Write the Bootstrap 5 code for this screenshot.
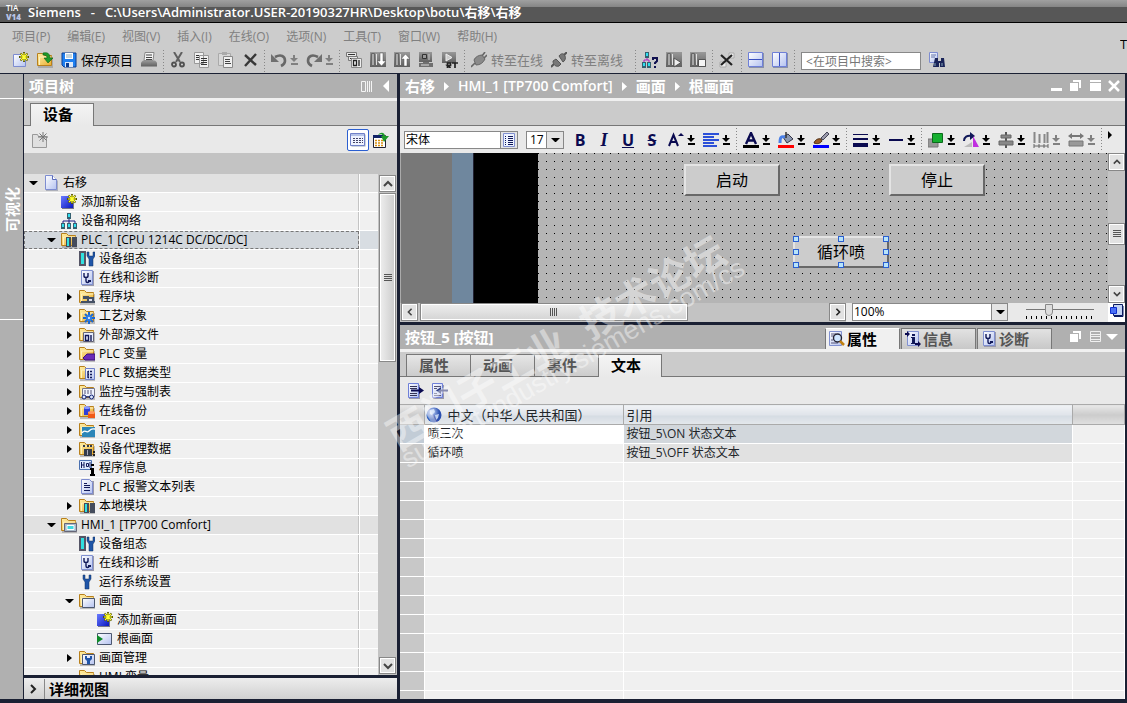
<!DOCTYPE html>
<html lang="zh-CN">
<head>
<meta charset="utf-8">
<meta name="viewport" content="width=device-width, initial-scale=1">
<title>Siemens - 右移</title>
<link rel="stylesheet" href="https://cdn.jsdelivr.net/npm/bootstrap@5.3.0/dist/css/bootstrap.min.css">
<style>
:root{--dark:#1a2033;--head:#b0b0b0;--strip:#cbcbcb;--tool:#e9e9e9;--track:#c3c3c3;--rule:#777}
body{font-family:"Open Sans","Noto Sans CJK SC",sans-serif;font-size:12px;line-height:18px;color:#000;background:var(--dark);overflow:hidden}
a,a:hover{color:inherit;text-decoration:none}
button{border:0;background:none;padding:0;color:inherit}
svg{display:block;flex:none}
.ic{width:16px;height:16px}
/* title and menus */
.titlebar{height:23px;padding:1px 6px 0;gap:6px;color:#fff;font-size:13px;font-weight:600;border-bottom:1px solid #000;background:linear-gradient(#a0a0a0,#858585 7px,#575757 7px,#575757)}
.tia{display:flex;flex-direction:column;font-size:8px;line-height:9px;width:16px}
.tia b{color:#b7c3e6}
.topbar{background:#ccc;border-bottom:1px solid var(--dark)}
.menus{gap:17px;padding:5px 12px 0;height:26px;color:#808080}
.brand-cut{width:7px;overflow:hidden;font-size:13px;padding-top:12px}
.tools{height:24px}
.top-tools{padding-left:9px}
.tbtn{display:flex;align-items:center;justify-content:center;height:20px;padding:0 4px;gap:4px;font-size:13px;white-space:nowrap}
.tbtn.drop{gap:3px}
.tbtn.off{color:#808080}
.top-tools .tbtn{height:22px;padding-bottom:2px}
.sep{width:1px;height:23px;margin:0 2px;background:repeating-linear-gradient(#888 0 1px,transparent 1px 3px)}
.find{width:120px;height:18px;font-size:12px;line-height:14px;padding:0 4px;border:1px solid #888;border-radius:0;background:#fff}
.find::placeholder{color:#777;opacity:1}
/* frames */
.workarea{min-height:0;padding:0 2px 4px 0}
.rail{width:24px;background:var(--head);border-right:1px solid var(--dark);color:#fff;font-size:15px;font-weight:700}
.rail div:nth-child(1){height:25px;border-bottom:1px solid #fff}
.rail a{height:221px;writing-mode:vertical-rl;text-orientation:sideways;transform:rotate(180deg);border-top:1px solid #fff;display:flex;align-items:center;justify-content:center}
.side{width:373px;margin-right:3px}
.head{height:27px;flex:none;background:var(--head);border-bottom:3px solid #f0f0f0;color:#fff;font-size:15px;font-weight:700;padding:0 5px}
.strip{height:25px;flex:none;padding:0 6px;background:var(--strip);border-bottom:1px solid var(--rule)}
.subtools{height:27px;flex:none;background:var(--tool)}
.tabx{height:22px;width:64px;padding:0 0 2px 12px;text-align:left;border:1px solid var(--rule);border-bottom:0;font-size:15px;line-height:18px;font-weight:700;color:#555;background:linear-gradient(#e6e6e6,#ccc)}
.tabx.on{height:23px;margin-bottom:-1px;color:#000;background:linear-gradient(#f4f4f4,var(--tool))}
.bluebox{border:1px solid #2b5fd0;border-radius:2px;background:#fff;width:22px;height:22px;padding:2px}
.band{height:21px;flex:none;background:var(--track)}
/* tree */
.treewrap{min-height:0;background:#f0f0f0}
.tree li{height:19px;background:#f0f0f0;border-bottom:1px solid #fff;padding-right:19px}
.tree li.grp{background:#e1e1e1}
.tree li.sel{background:#d8dde2}
.tree .cell{height:18px;border-right:1px solid #c4c4c4;box-shadow:1px 0 #fff;white-space:nowrap}
.tree li.sel .cell{background:#d2d7dc;outline:1px dashed #777;outline-offset:-1px}
.tree .tog{width:12px;height:12px;margin-right:4px;flex:none}
.tree a{margin-left:4px}
.l0{padding-left:3px}.l1{padding-left:21px}.l2{padding-left:39px}.l3{padding-left:57px}
.vbar{width:19px;background:var(--track);padding:1px}
.sb{width:17px;height:17px;border:1px solid #888;box-shadow:inset 0 0 0 1px #fff;background:#e2e2e2;display:flex;align-items:center;justify-content:center;flex:none}
.side .thumb{height:169px;margin-top:1px;background:linear-gradient(90deg,#eee,#ccc)}
.detail{height:21px;margin-top:3px;background:linear-gradient(#ededed,#d0d0d0);font-size:15px;font-weight:700}
.detail .tbtn{width:21px;padding:0 7px 0 4px;border-right:1px solid #888}
/* editor */
.crumbs{gap:8px}
.crumbs>svg{width:7px;height:9px}
.latin{font-size:14px;font-weight:600}
.combo{height:18px;border:1px solid #888;background:#fff}
.combo select{appearance:none;border:0;background:#fff;font-size:12px;line-height:16px;padding:0 1px;min-width:0;flex:1;color:#000}
.combo span{width:17px;border-left:1px solid #888;background:#e4e4e4}
.fontbox{width:114px;margin-left:4px}.sizebox{width:38px;margin:0 4px 0 8px}.sizebox select{padding-left:3px}
.fmt{width:24px;font-size:16px;font-weight:700;color:#0a0a50;height:20px;line-height:18px}
.fmt-i{font-family:"Liberation Serif",serif;font-style:italic;font-size:18px}
.editor{height:150px;background:#b5b5b5}
.pad-a{width:52px;background:#787878;border-left:1px solid #aaa}
.pad-b{width:22px;background:#6f879e;border-right:1px solid #223}
.pad-c{width:64px;background:#000}
.screen{background-color:#b5b5b5;background-image:linear-gradient(90deg,transparent 1px,#b5b5b5 1px),linear-gradient(#000 1px,#b5b5b5 1px);background-size:8px 8px}
.hmibtn{position:absolute;width:96px;height:32px;border:2px solid;border-color:#e4e4e4 #686868 #686868 #e4e4e4;background:#ccc;font-size:16px;line-height:26px}
.b-start{left:146px;top:11px}.b-stop{left:351px;top:11px}.b-loop{left:255px;top:83px}
.hmibtn i{position:absolute;width:6px;height:6px;border:1px solid #2b5fd0;background:#b8e4fa}
.n{top:-2px}.m{top:11px}.s{bottom:-2px}.w{left:-2px}.c{left:43px}.e{right:-2px}
.rbar{width:17px;background:var(--track)}
.rbar .sb{height:18px}.rbar .mid{height:22px;margin-top:11px}
.hbar{height:19px;background:var(--tool)}
.htrack{background:var(--track);padding-left:1px}
.htrack .thumb{width:268px;height:18px;margin-left:2px;background:linear-gradient(#eee,#d4d4d4)}
.htrack .sb{height:18px}
.zoombox{width:156px;margin:0 18px 0 6px}.zoombox span{width:16px}
.slide{width:68px}
.slide input{appearance:none;display:block;width:100%;height:13px;margin:0;background:linear-gradient(#777,#777) 0 6px/100% 1px no-repeat}
.slide input::-webkit-slider-thumb{appearance:none;width:8px;height:12px;background:#ddd;border:1px solid #888;border-radius:0 0 4px 4px}
.ticks{height:3px;background:repeating-linear-gradient(90deg,#000 0 1px,transparent 1px 5px)}
.corner{width:17px;background:#fff;margin-left:14px}
/* inspector */
.inspect{margin-top:3px;min-height:0;background:#f0f0f0}
.itabs{align-self:flex-end;gap:1px;margin-right:16px}
.itab{display:flex;align-items:center;gap:2px;width:75px;height:21px;padding:0 3px;border:1px solid var(--rule);border-bottom:0;color:#555;font-size:15px;font-weight:700;background:linear-gradient(#e2e2e2,#c8c8c8)}
.itab.on{color:#000;background:#f0f0f0;border-top-color:#fff}
.texts{table-layout:fixed;--bs-table-bg:transparent;font-size:12px;--bs-border-color:#fff}
.texts th,.texts td{height:19px;padding:0 3px!important;line-height:18px;border:0;border-bottom:1px solid #fff!important;border-right:1px solid #fff;white-space:nowrap}
.texts th{height:20px;font-weight:400;font-size:13px;border-top:1px solid #aaa!important;border-bottom:1px solid #aaa!important;border-right-color:#aaa;background:linear-gradient(#f0f2f5,#e0e4ea 50%,#d4dbe2 51%,#e4e8ec)}
.texts th.plain{background:linear-gradient(#e8e8e8,#ccc 50%,#e0e0e0)}
.texts th .d-flex{margin-left:-2px;gap:6px}
.texts td:first-child{background:#c8c8c8}
.texts tr.cur td:nth-child(3){background:#d2d7dc}
.texts tr.cur td:first-child{background:#c2ccd6}
.texts tr.cur td:nth-child(2){background:#fff}
.texts tr.alt td:nth-child(3){background:#e1e1e1}
.overmark{position:absolute;left:381px;top:422px;transform:rotate(-30deg);transform-origin:0 0;color:#fff;opacity:.42;pointer-events:none;white-space:pre;font-family:"Liberation Sans","Noto Sans CJK SC",sans-serif;font-size:40px;font-weight:700;line-height:40px}
.overmark span{display:block;font-size:27px;line-height:26px;font-weight:400;margin-top:-8px}
</style>
</head>
<body class="d-flex flex-column vh-100">
<svg width="0" height="0" class="position-absolute" aria-hidden="true">
<defs>
<linearGradient id="gy" x1="0" y1="0" x2="1" y2="1"><stop offset="0" stop-color="#fff0a8"/><stop offset="1" stop-color="#e8ac30"/></linearGradient>
<linearGradient id="gb" x1="0" y1="0" x2="1" y2="1"><stop offset="0" stop-color="#fff"/><stop offset="1" stop-color="#b4c2f0"/></linearGradient>
<linearGradient id="gd" x1="0" y1="0" x2="1" y2="1"><stop offset="0" stop-color="#6a7bff"/><stop offset="1" stop-color="#0a18c0"/></linearGradient>
<linearGradient id="gs" x1="0" y1="0" x2="0" y2="1"><stop offset="0" stop-color="#999"/><stop offset="1" stop-color="#606060"/></linearGradient>
<radialGradient id="gg" cx=".35" cy=".3"><stop offset="0" stop-color="#cfe0ff"/><stop offset="1" stop-color="#2a4fb0"/></radialGradient>
</defs>
<symbol id="right" viewBox="0 0 12 12"><path d="M4 2l5 4-5 4z"/></symbol>
<symbol id="down" viewBox="0 0 12 12"><path d="M2 4h9l-4 4h-1z"/></symbol>
<symbol id="dd" viewBox="0 0 8 10"><path d="M3 0h2v3h3L4 7 0 3h3zM1 8h7v2H1z" fill="currentColor"/></symbol>
<symbol id="chev" viewBox="0 0 10 10"><path d="M1 7l4-4 4 4" fill="none" stroke="#444" stroke-width="2"/></symbol>
<symbol id="chevd" viewBox="0 0 10 10"><path d="M1 3l4 4 4-4" fill="none" stroke="#444" stroke-width="2"/></symbol>
<symbol id="chevl" viewBox="0 0 10 10"><path d="M7 1L3 5l4 4" fill="none" stroke="#444" stroke-width="2"/></symbol>
<symbol id="chevr" viewBox="0 0 10 10"><path d="M3 1l4 4-4 4" fill="none" stroke="#222" stroke-width="2"/></symbol>
<symbol id="grip" viewBox="0 0 10 10"><path d="M1 1.500h8M1 3.500h8M1 5.500h8M1 7.500h8" stroke="#555"/></symbol>
<symbol id="gripv" viewBox="0 0 10 10"><path d="M1.500 1v8M3.500 1v8M5.500 1v8M7.500 1v8" stroke="#555"/></symbol>
<symbol id="star" viewBox="0 0 16 16"><path d="M11 0v10M6 5h10M7.500 1.500l7 7M14.500 1.500l-7 7" stroke="#555500" stroke-width="1.800"/><path d="M11 1v8M7 5h8M8 2l6 6M14 2l-6 6" stroke="#ffff30" stroke-width="1.100"/></symbol>
<symbol id="page" viewBox="0 0 16 16"><path d="M3 2h8l4 4v10H3z" fill="#8a8fa0" opacity=".6"/><path d="M2.500.5h7l4 4v10h-11z" fill="url(#gb)" stroke="#7d8cd0"/><path d="M9.500.5v4h4" fill="#fff" stroke="#5b6bb8"/></symbol>
<symbol id="fold" viewBox="0 0 16 16"><path d="M1 3h6l1 2h8v11H1z" fill="#888" opacity=".5"/><path d="M.5 1.500h5l2 2h7v10H.5z" fill="url(#gy)" stroke="#b8801c"/><path d="M2.500 13V5h12" stroke="#fff2bd" fill="none"/></symbol>
<symbol id="new" viewBox="0 0 16 16"><path d="M.5 2.500h12v12H.5z" fill="url(#gb)" stroke="#7d8cd0"/><use href="#star"/></symbol>
<symbol id="open" viewBox="0 0 16 16"><use href="#fold"/><path d="M6 1c5-1 7 1 7 5h3l-5 5-4-5h3c0-2-1-3-4-3z" fill="#1e9a2a" stroke="#0c5f14" stroke-width=".6"/></symbol>
<symbol id="save" viewBox="0 0 16 16"><path d="M1 1h14v14H3l-2-2z" fill="#1f80f0" stroke="#0a3e94"/><path d="M4 1h8v6H4z" fill="#fff"/><path d="M5 3h6M5 5h6" stroke="#8ab"/><path d="M4 10h8v5H4z" fill="#dce8f8"/><path d="M5 11h3v4H5z" fill="#0a3e94"/></symbol>
<symbol id="print" viewBox="0 0 16 16"><path d="M4 .5h9l-1 8H3z" fill="#f4f4f4" stroke="#888"/><path d="M5 3h6M5 5.500h6M5 7.500h6" stroke="#444"/><path d="M2 8.500h12l2 2v4H0v-4z" fill="url(#gs)"/></symbol>
<symbol id="cut" viewBox="0 0 16 16"><path d="M4 0l6 10M12 0L6 10" stroke="#606060" stroke-width="2"/><circle cx="4" cy="12.500" r="2" fill="none" stroke="#505050" stroke-width="1.800"/><circle cx="12" cy="12.500" r="2" fill="none" stroke="#505050" stroke-width="1.800"/></symbol>
<symbol id="copy" viewBox="0 0 16 16"><path d="M.5.5h9v11h-9zM5.500 3.500h9v12h-9z" fill="#f0f0f0" stroke="#999"/><path d="M2 3.500h3M2 5.500h3M2 7.500h3M7 6.500h6M7 8.500h6M7 10.500h6M7 12.500h6" stroke="#333"/></symbol>
<symbol id="paste" viewBox="0 0 16 16"><path d="M.5 1.500h12v12H.5z" fill="#d8d8d8" stroke="#aaa"/><path d="M4 0h5v3H4z" fill="#aaa"/><path d="M5.500 4.500h9v11h-9z" fill="#f0f0f0" stroke="#888"/><path d="M7 7.500h5M7 9.500h5M7 11.500h6" stroke="#444"/></symbol>
<symbol id="del" viewBox="0 0 16 16"><path d="M3 3l11 10M14 2L3 14" stroke="#383838" stroke-width="2.400"/></symbol>
<symbol id="undo" viewBox="0 0 16 16"><path d="M4 5c6-3 10-1 10 4 0 3-2 4-4 5" fill="none" stroke="#686868" stroke-width="2.600"/><path d="M0 2v8h8z" fill="#707070"/></symbol>
<symbol id="redo" viewBox="0 0 16 16"><path d="M12 5C6 2 2 4 2 9c0 3 2 4 4 5" fill="none" stroke="#686868" stroke-width="2.600"/><path d="M16 2v8H8z" fill="#707070"/></symbol>
<symbol id="comp" viewBox="0 0 16 16"><path d="M.5.5h10v4H.5zM2.500 4.500h9v4h-9z" fill="#e8e8e8" stroke="#777"/><path d="M2 2.500h7M4 6.500h6" stroke="#333"/><path d="M5.500 6.500h10v9h-10z" fill="#eee" stroke="#888"/><path d="M7.500 8.500h3v5h-3zM13 8v6" fill="none" stroke="#222" stroke-width="1.300"/></symbol>
<symbol id="dev" viewBox="0 0 16 16"><path d="M0 0h16v15H0z" fill="url(#gs)"/><path d="M1.500 1.500h3v12h-3z" fill="#a8a8a8" stroke="#666"/><path d="M6 2h1v11H6z" fill="#e0e0e0"/></symbol>
<symbol id="dl" viewBox="0 0 16 16"><use href="#dev"/><path d="M10 1h3v8h3l-4.500 5L7 9h3z" fill="#fff" stroke="#555" stroke-width=".5"/></symbol>
<symbol id="ul" viewBox="0 0 16 16"><use href="#dev"/><path d="M10 14h3V7h3l-4.500-5L7 7h3z" fill="#fff" stroke="#555" stroke-width=".5"/></symbol>
<symbol id="pc" viewBox="0 0 16 16"><path d="M1 0h13v10H1z" fill="url(#gs)"/><path d="M4.500 2.500h4v4h-4z" fill="#999" stroke="#333"/><path d="M11 2v6" stroke="#ccc"/><path d="M5 10h6v1H5zM1 11h14v4H1z" fill="#707070"/><path d="M3 13h8" stroke="#ddd"/></symbol>
<symbol id="rt" viewBox="0 0 16 16"><path d="M0 0h14v11H0z" fill="url(#gs)"/><path d="M4 2l6 3.500L4 9z" fill="#ccc" stroke="#eee"/><path d="M5.500 16v-5h3v2.500h-3l3 2.500M10 11h6M13 11v5" stroke="#222" fill="none" stroke-width="1.700"/></symbol>
<symbol id="plug" viewBox="0 0 16 16"><path d="M0 15l4-4M11 4l3-4M13 6l3-3" stroke="#666" stroke-width="1.600"/><path d="M3 8c1-3 5-5 8-5l3 4c-2 4-5 6-9 6z" fill="#8a8a8a" stroke="#666"/></symbol>
<symbol id="unplug" viewBox="0 0 16 16"><path d="M0 15l3-3M13 3l3-3" stroke="#555" stroke-width="2"/><path d="M2 9l3-2 5 5-2 2c-3 1-6-1-6-5zM8 4c2-3 5-3 6 0 1 2 0 5-2 6z" fill="#777" stroke="#555"/></symbol>
<symbol id="net" viewBox="0 0 16 16"><path d="M6 0h4v6H6zM0 10h4v6H0zM6 10h4v6H6zM12 10h4v6h-4z" fill="#356070"/><path d="M7 1h2v3H7zM1 11h2v3H1zM7 11h2v3H7zM13 11h2v3h-2z" fill="#30e0f0"/><path d="M2 10V8h12v2M8 6v4" fill="none" stroke="#1a1a80"/></symbol>
<symbol id="netq" viewBox="0 0 16 16"><path d="M3 0h4v6H3zM0 10h4v6H0zM5 10h4v6H5z" fill="#356070"/><path d="M4 1h2v3H4zM1 11h2v3H1zM6 11h2v3H6z" fill="#30e0f0"/><path d="M2 10V8h5v2M5 6v2" fill="none" stroke="#b020c0"/><path d="M11 8V6h4v3l-2 2v1M13 14v2" fill="none" stroke="#101050" stroke-width="2"/></symbol>
<symbol id="run" viewBox="0 0 16 16"><use href="#dev"/><path d="M8 6l7 4.500L8 15z" fill="#eee" stroke="#555"/></symbol>
<symbol id="stop" viewBox="0 0 16 16"><use href="#dev"/><path d="M8.500 7.500h7v7h-7z" fill="#f4f4f4" stroke="#555"/></symbol>
<symbol id="sph" viewBox="0 0 16 16"><path d="M1 1h15v15H1z" fill="#8890a8"/><path d="M.5.5h14v14H.5z" fill="url(#gb)" stroke="#6f80d8"/><path d="M1 7.500h13" stroke="#3a50c0"/></symbol>
<symbol id="spv" viewBox="0 0 16 16"><path d="M1 1h15v15H1z" fill="#8890a8"/><path d="M.5.5h14v14H.5z" fill="url(#gb)" stroke="#6f80d8"/><path d="M7.500 1v13" stroke="#3a50c0"/></symbol>
<symbol id="delx" viewBox="0 0 16 16"><path d="M1 10h6v5H1zM10 1h5v5h-5z" fill="#eee" stroke="#aaa"/><path d="M2 3l11 10M13 3L2 13" stroke="#222" stroke-width="2.200"/></symbol>
<symbol id="bino" viewBox="0 0 16 16"><path d="M.5.5h8v10h-8z" fill="url(#gb)" stroke="#7d8cd0"/><path d="M2 3h5M2 5h4" stroke="#67a"/><path d="M6 6h3v3h3V6h3l1 9h-5v-4h-1v4H4z" fill="#1a2458"/><path d="M6 11v3M13 11v3" stroke="#8ab"/></symbol>
<symbol id="newg" viewBox="0 0 16 16"><path d="M.5 2.500h5l1 2h8v11H.5z" fill="#e0e0e0" stroke="#999"/><path d="M11 0v10M6 5h10M7.500 1.500l7 7M14.500 1.500l-7 7" stroke="#777"/></symbol>
<symbol id="list" viewBox="0 0 16 16"><path d="M1.500 2.500h14v12h-14z" fill="#9ab"/><path d="M.5 1.500h14v12H.5z" fill="#eef3ff" stroke="#6f80c8"/><path d="M1 3h13" stroke="#b4c2e8" stroke-width="2"/><path d="M3 6.500h10M3 8.500h10M3 10.500h10" stroke="#446" stroke-dasharray="2 1"/></symbol>
<symbol id="exp" viewBox="0 0 16 16"><path d="M.5 3.500h12v12H.5z" fill="#fff" stroke="#223"/><path d="M0 4.500h12" stroke="#126" stroke-width="3"/><path d="M2 8.500h9M2 11h9M2 13.500h9" stroke="#d89010" stroke-width="1.500" stroke-dasharray="2 1"/><path d="M5 3c3-4 7-2 7 1h4l-5 6-3-6h2c-1-2-2-2-5-1z" fill="#1e9a2a"/></symbol>
<symbol id="addn" viewBox="0 0 16 16"><path d="M1 3h12v12H1z" fill="#778"/><path d="M0 2h12v12H0z" fill="url(#gd)"/><use href="#star"/></symbol>
<symbol id="wr" viewBox="0 0 16 16"><path d="M4 1v4l2 3v7h4V8l2-3V1l-2 0v4H6V1z" fill="#1f55a8" stroke="#103060" stroke-width=".5"/></symbol>
<symbol id="conf" viewBox="0 0 16 16"><path d="M0 0h7v15H0z" fill="#556"/><path d="M2 2h3v11H2z" fill="#30e0e0"/><use href="#wr" x="4"/></symbol>
<symbol id="dia" viewBox="0 0 16 16"><path d="M3 1h12v15H3z" fill="#99a"/><path d="M2.500.5h11v14h-11z" fill="url(#gb)" stroke="#8090d0"/><path d="M5 3v3c0 2 4 2 4 0V3M7 8v3c0 2 3 2 3 0" fill="none" stroke="#101858" stroke-width="1.400"/><path d="M9 10h3v2H9z" fill="#101858"/></symbol>
<symbol id="f-plc" viewBox="0 0 16 16"><use href="#fold"/><path d="M5 5h5v10H5zM11 5h5v10h-5z" fill="#444c5c"/><path d="M6 6h2v8H6z" fill="#30e0e0"/></symbol>
<symbol id="f-blk" viewBox="0 0 16 16"><use href="#fold"/><path d="M4 7h6v3H4zM8 8h7v6H8z" fill="#445064"/><path d="M10 10h3v2h-3z" fill="#dde"/><path d="M2 13h6M14 13h2" stroke="#445064" stroke-width="2"/></symbol>
<symbol id="f-gear" viewBox="0 0 16 16"><use href="#fold"/><path d="M10 4v12M4 10h12M6 6l8 8M14 6l-8 8" stroke="#1c68d0" stroke-width="2"/><circle cx="10" cy="10" r="3" fill="#2f80e8"/><circle cx="10" cy="10" r="1" fill="#fff"/></symbol>
<symbol id="f-src" viewBox="0 0 16 16"><use href="#fold"/><path d="M4.500 5.500h10v9h-10z" fill="#e8eefc" stroke="#667"/><path d="M6.500 8.500h3v5h-3zM12 8v6" fill="none" stroke="#101858" stroke-width="1.400"/></symbol>
<symbol id="f-tag" viewBox="0 0 16 16"><use href="#fold"/><path d="M4 12l4-4h8v6H6z" fill="#6a2bb8" stroke="#3a107a"/></symbol>
<symbol id="f-typ" viewBox="0 0 16 16"><use href="#fold"/><path d="M6.500 3.500h9v11h-9z" fill="url(#gb)" stroke="#6f80c8"/><path d="M9 6v7M9 6.500h1M9 9.500h1M9 12.500h1M11 6.500h2M11 9.500h2M11 12.500h2" stroke="#101858" stroke-width="1.400"/></symbol>
<symbol id="f-wat" viewBox="0 0 16 16"><use href="#fold"/><path d="M3.500 4.500h12v8h-12z" fill="#eef3ff" stroke="#778"/><path d="M5 7h9M5 9h9" stroke="#557" stroke-dasharray="2 1"/><circle cx="5" cy="13" r="2" fill="#dbe8ff" stroke="#102070"/><circle cx="12.500" cy="13" r="2" fill="#dbe8ff" stroke="#102070"/><path d="M7 13h4" stroke="#102070"/></symbol>
<symbol id="f-bak" viewBox="0 0 16 16"><use href="#fold"/><path d="M5 4h6v8H5z" fill="#3040d8"/><ellipse cx="8" cy="4.500" rx="3" ry="1.500" fill="#8898ff"/><path d="M9 9h7v6H9z" fill="#f05a18"/><ellipse cx="12.500" cy="9.500" rx="3.500" ry="1.500" fill="#ff9a60"/></symbol>
<symbol id="f-tr" viewBox="0 0 16 16"><use href="#fold"/><path d="M3 5h13v10H3z" fill="#2c86b8"/><path d="M3 11c3-5 4 1 7-2s3-2 6-2" fill="none" stroke="#fff" stroke-width="1.300"/></symbol>
<symbol id="f-prx" viewBox="0 0 16 16"><use href="#fold"/><path d="M4 4h2v2H4zM8 4h2v2H8zM11 4h2v2h-2zM5 8h8v7H5z" fill="#343c4c"/><path d="M8.500 9v5" stroke="#aab"/><path d="M14 10h2v2h-2zM14 13h2v2h-2z" fill="#222"/></symbol>
<symbol id="info" viewBox="0 0 16 16"><path d="M.5.500h12v9H.5z" fill="#dbeaff" stroke="#4a70b0"/><path d="M2.500 2v6M2 5h3M5 2v6M7.500 3.500h2v3h-2zM11 2v6" fill="none" stroke="#101858"/><path d="M12 4h3v2h-3zM11 8h4v6h1v2h-5v-2h1v-4h-1z" fill="#000"/></symbol>
<symbol id="txt" viewBox="0 0 16 16"><path d="M3 2h12v14H3z" fill="#99a"/><path d="M2.500.5h8l3 3v11h-11z" fill="url(#gb)" stroke="#7d8cd0"/><path d="M5 4.500h3M5 6.500h6M5 8.500h6M5 11.500h6" stroke="#101858"/></symbol>
<symbol id="f-hmi" viewBox="0 0 16 16"><use href="#fold"/><path d="M3.500 6.500h12v8h-12z" fill="#a8b8c8" stroke="#667"/><path d="M6 8.500h7v4H6z" fill="#40d8e0" stroke="#fff"/></symbol>
<symbol id="f-scr" viewBox="0 0 16 16"><use href="#fold"/><path d="M3.500 5.500h12v9h-12z" fill="url(#gb)" stroke="#4c5870"/></symbol>
<symbol id="scr" viewBox="0 0 16 16"><path d="M.5 2.500h14v11H.5z" fill="url(#gb)" stroke="#4c5870"/><path d="M0 4l6 4-6 4z" fill="#0f8a2a"/></symbol>
<symbol id="f-man" viewBox="0 0 16 16"><use href="#fold"/><path d="M3.500 4.500h12v10h-12z" fill="url(#gb)" stroke="#4c5870"/><path d="M6 6v3l2 2v3h3v-3l2-2V6l-2 0v2H8V6z" fill="#1f55a8"/></symbol>
<symbol id="al" viewBox="0 0 16 16"><path d="M0 2h16M0 5h11M0 8h16M0 11h11M0 14h14" stroke="#2c50d8" stroke-width="2"/></symbol>
<symbol id="fill" viewBox="0 0 16 16"><path d="M5 5l5-3 5 5-6 4z" fill="#8c98b0" stroke="#334"/><path d="M8 0v6" stroke="#333" stroke-width="1.500"/><path d="M2 11c0-6 1-7 5-6" fill="none" stroke="#4a80e8" stroke-width="3"/><path d="M0 13h16v3H0z" fill="#f00"/></symbol>
<symbol id="brush" viewBox="0 0 16 16"><path d="M14 0l2 2-6 6-2-2z" fill="#99a" stroke="#445"/><path d="M1 11c1-3 4-5 7-4l1 2c-2 3-5 3-8 2z" fill="#9a5c28" stroke="#4a2a10"/><path d="M0 13h16v3H0z" fill="#00f"/></symbol>
<symbol id="lw" viewBox="0 0 16 16"><path d="M0 2.500h15" stroke="#0a0a50"/><path d="M0 7h15" stroke="#0a0a50" stroke-width="2"/><path d="M0 13h15" stroke="#0a0a50" stroke-width="4"/></symbol>
<symbol id="ln" viewBox="0 0 16 16"><path d="M1 8h14" stroke="#0a0a50" stroke-width="2"/></symbol>
<symbol id="ord" viewBox="0 0 16 16"><path d="M0 7h10v8H0z" fill="#999" stroke="#777"/><path d="M4.500 1.500h10v9h-10z" fill="#16b030" stroke="#0c6a1c"/></symbol>
<symbol id="rot" viewBox="0 0 16 16"><path d="M1 9c0-4 3-6 8-5" fill="none" stroke="#101858" stroke-width="2"/><path d="M7 0l5 4-5 4z" fill="#101858"/><path d="M1 15l8-5v5z" fill="#bbb"/><path d="M10 4l6 11h-6z" fill="#c030e0"/></symbol>
<symbol id="cen" viewBox="0 0 16 16"><path d="M8 0v16" stroke="#555" stroke-width="2"/><path d="M3 3h10v3H3zM1 9h14v4H1z" fill="#888" stroke="#666"/></symbol>
<symbol id="dis" viewBox="0 0 16 16"><path d="M1.500 0v11M6.500 2v9M11.500 2v9M14.500 0v11" stroke="#888" stroke-width="2"/><path d="M1 14h14M1 12v4M6 12v4M11 12v4M15 12v4" stroke="#666"/></symbol>
<symbol id="siz" viewBox="0 0 16 16"><path d="M0 4l4-3v2h8V1l4 3-4 3V5H4v2z" fill="#777"/><path d="M1 9h14v5H1z" fill="#999" stroke="#777"/></symbol>
<symbol id="wr2" viewBox="0 0 16 16"><path d="M2 5h8v8H2zM5 2h8v8h-2V4H5z" fill="#fff"/></symbol>
<symbol id="wmx" viewBox="0 0 16 16"><path d="M2 2h11v2H2zM2 5h11v8H2z" fill="#fff"/></symbol>
<symbol id="prp" viewBox="0 0 16 16"><path d="M.5.5h12v14H.5z" fill="url(#gb)" stroke="#8090d0"/><path d="M2 3h5M2 5h3M2 9h2M2 12h7" stroke="#557"/><circle cx="8.500" cy="7" r="4" fill="#cfe6ff" stroke="#223" stroke-width="1.400"/><path d="M11 10l4 4" stroke="#c08010" stroke-width="2.500"/></symbol>
<symbol id="inf" viewBox="0 0 16 16"><path d="M2.500.5h11v14h-11z" fill="url(#gb)" stroke="#8090d0"/><path d="M7 3h3v2H7zM6 6h4v6h1v1H6v-1h1V7H6z" fill="#101858"/><path d="M0 2h2V0l3 3-3 3V4H0zM10 12h3v-2l3 3-3 3v-2h-3z" fill="#0a0a50"/></symbol>
<symbol id="ex1" viewBox="0 0 16 16"><path d="M1 2h11v14H1z" fill="#99a"/><path d="M.5.5h10v14H.5z" fill="url(#gb)" stroke="#6f80d8"/><path d="M2 3.500h7M2 5.500h7M2 10.500h7M2 12.500h7" stroke="#335"/><path d="M3 6.500h8V4l5 3.500-5 3.500V8.500H3z" fill="#0a0a50"/></symbol>
<symbol id="ex2" viewBox="0 0 16 16"><path d="M1 2h11v14H1z" fill="#99a"/><path d="M.5.5h10v14H.5z" fill="url(#gb)" stroke="#6f80d8"/><path d="M2 3.500h7M2 5.500h3M2 10.500h3M2 12.500h7" stroke="#557"/><path d="M16 6.500H9V4L4 7.500 9 11V8.500h7z" fill="#303878"/></symbol>
</svg>

<header>
  <div class="titlebar d-flex align-items-center"><span class="tia"><span>TIA</span><b>V14</b></span><span>Siemens</span><span class="mx-1">-</span><span>C:\Users\Administrator.USER-20190327HR\Desktop\botu\右移\右移</span></div>
  <div class="topbar d-flex">
    <div class="flex-grow-1">
      <nav class="menus d-flex"><a href="#">项目(P)</a><a href="#">编辑(E)</a><a href="#">视图(V)</a><a href="#">插入(I)</a><a href="#">在线(O)</a><a href="#">选项(N)</a><a href="#">工具(T)</a><a href="#">窗口(W)</a><a href="#">帮助(H)</a></nav>
      <div class="tools top-tools d-flex align-items-center">
        <button class="tbtn" aria-label="新建"><svg class="ic"><use href="#new"/></svg></button>
        <button class="tbtn" aria-label="打开"><svg class="ic"><use href="#open"/></svg></button>
        <button class="tbtn"><svg class="ic"><use href="#save"/></svg>保存项目</button>
        <button class="tbtn" aria-label="打印"><svg class="ic"><use href="#print"/></svg></button>
        <span class="sep"></span>
        <button class="tbtn" aria-label="剪切"><svg class="ic"><use href="#cut"/></svg></button>
        <button class="tbtn" aria-label="复制"><svg class="ic"><use href="#copy"/></svg></button>
        <button class="tbtn" aria-label="粘贴"><svg class="ic"><use href="#paste"/></svg></button>
        <button class="tbtn" aria-label="删除"><svg class="ic"><use href="#del"/></svg></button>
        <span class="sep"></span>
        <button class="tbtn drop off" aria-label="撤销"><svg class="ic"><use href="#undo"/></svg><svg width="8" height="10"><use href="#dd"/></svg></button>
        <button class="tbtn drop off" aria-label="重做"><svg class="ic"><use href="#redo"/></svg><svg width="8" height="10"><use href="#dd"/></svg></button>
        <span class="sep"></span>
        <button class="tbtn" aria-label="编译"><svg class="ic"><use href="#comp"/></svg></button>
        <button class="tbtn" aria-label="下载"><svg class="ic"><use href="#dl"/></svg></button>
        <button class="tbtn" aria-label="上传"><svg class="ic"><use href="#ul"/></svg></button>
        <button class="tbtn" aria-label="仿真"><svg class="ic"><use href="#pc"/></svg></button>
        <button class="tbtn" aria-label="启动运行系统"><svg class="ic"><use href="#rt"/></svg></button>
        <span class="sep"></span>
        <button class="tbtn off"><svg class="ic"><use href="#plug"/></svg>转至在线</button>
        <button class="tbtn off"><svg class="ic"><use href="#unplug"/></svg>转至离线</button>
        <span class="sep ms-2"></span>
        <button class="tbtn" aria-label="可访问的设备"><svg class="ic"><use href="#netq"/></svg></button>
        <button class="tbtn" aria-label="启动 CPU"><svg class="ic"><use href="#run"/></svg></button>
        <button class="tbtn" aria-label="停止 CPU"><svg class="ic"><use href="#stop"/></svg></button>
        <span class="sep"></span>
        <button class="tbtn" aria-label="交叉引用"><svg class="ic"><use href="#delx"/></svg></button>
        <span class="sep"></span>
        <button class="tbtn" aria-label="水平拆分"><svg class="ic"><use href="#sph"/></svg></button>
        <button class="tbtn" aria-label="垂直拆分"><svg class="ic"><use href="#spv"/></svg></button>
        <span class="sep"></span>
        <input class="find ms-1" type="text" aria-label="在项目中搜索" placeholder="&lt;在项目中搜索&gt;">
        <button class="tbtn ms-1" aria-label="搜索"><svg class="ic"><use href="#bino"/></svg></button>
      </div>
    </div>
    <div class="brand-cut">T</div>
  </div>
</header>

<main class="workarea d-flex flex-grow-1">
  <div class="rail d-flex flex-column flex-shrink-0"><div></div><a href="#">可视化</a></div>

  <section class="side d-flex flex-column flex-shrink-0">
    <div class="head d-flex align-items-center">项目树
      <svg class="ms-auto" width="11" height="11" viewBox="0 0 11 11"><path d="M.5.5h4v10h-4zM6.500 0v11M8.500 0v11M10.500 0v11" fill="none" stroke="#f4f4f4"/></svg>
      <svg class="ms-2" width="12" height="12" viewBox="0 0 12 12"><path d="M9 0v12L3 6z" fill="#fff"/></svg></div>
    <div class="strip d-flex align-items-end"><button class="tabx on">设备</button></div>
    <div class="subtools d-flex align-items-center px-2">
      <button aria-label="新建组"><svg class="ic"><use href="#newg"/></svg></button>
      <button class="bluebox ms-auto" aria-label="列表"><svg class="ic"><use href="#list"/></svg></button>
      <button class="ms-1" aria-label="导出"><svg class="ic"><use href="#exp"/></svg></button>
    </div>
    <div class="band"></div>
    <div class="treewrap d-flex flex-grow-1 overflow-hidden">
      <ul class="tree list-unstyled flex-grow-1 mb-0">
        <li class="grp"><div class="cell l0 d-flex align-items-center"><button class="tog" aria-label="折叠"><svg width="12" height="12"><use href="#down"/></svg></button><svg class="ic"><use href="#page"/></svg><a href="#">右移</a></div></li>
        <li><div class="cell l1 d-flex align-items-center"><span class="tog"></span><svg class="ic"><use href="#addn"/></svg><a href="#">添加新设备</a></div></li>
        <li><div class="cell l1 d-flex align-items-center"><span class="tog"></span><svg class="ic"><use href="#net"/></svg><a href="#">设备和网络</a></div></li>
        <li class="sel"><div class="cell l1 d-flex align-items-center"><button class="tog" aria-label="折叠"><svg width="12" height="12"><use href="#down"/></svg></button><svg class="ic"><use href="#f-plc"/></svg><a href="#">PLC_1 [CPU 1214C DC/DC/DC]</a></div></li>
        <li><div class="cell l2 d-flex align-items-center"><span class="tog"></span><svg class="ic"><use href="#conf"/></svg><a href="#">设备组态</a></div></li>
        <li><div class="cell l2 d-flex align-items-center"><span class="tog"></span><svg class="ic"><use href="#dia"/></svg><a href="#">在线和诊断</a></div></li>
        <li><div class="cell l2 d-flex align-items-center"><button class="tog" aria-label="展开"><svg width="12" height="12"><use href="#right"/></svg></button><svg class="ic"><use href="#f-blk"/></svg><a href="#">程序块</a></div></li>
        <li><div class="cell l2 d-flex align-items-center"><button class="tog" aria-label="展开"><svg width="12" height="12"><use href="#right"/></svg></button><svg class="ic"><use href="#f-gear"/></svg><a href="#">工艺对象</a></div></li>
        <li><div class="cell l2 d-flex align-items-center"><button class="tog" aria-label="展开"><svg width="12" height="12"><use href="#right"/></svg></button><svg class="ic"><use href="#f-src"/></svg><a href="#">外部源文件</a></div></li>
        <li><div class="cell l2 d-flex align-items-center"><button class="tog" aria-label="展开"><svg width="12" height="12"><use href="#right"/></svg></button><svg class="ic"><use href="#f-tag"/></svg><a href="#">PLC 变量</a></div></li>
        <li><div class="cell l2 d-flex align-items-center"><button class="tog" aria-label="展开"><svg width="12" height="12"><use href="#right"/></svg></button><svg class="ic"><use href="#f-typ"/></svg><a href="#">PLC 数据类型</a></div></li>
        <li><div class="cell l2 d-flex align-items-center"><button class="tog" aria-label="展开"><svg width="12" height="12"><use href="#right"/></svg></button><svg class="ic"><use href="#f-wat"/></svg><a href="#">监控与强制表</a></div></li>
        <li><div class="cell l2 d-flex align-items-center"><button class="tog" aria-label="展开"><svg width="12" height="12"><use href="#right"/></svg></button><svg class="ic"><use href="#f-bak"/></svg><a href="#">在线备份</a></div></li>
        <li><div class="cell l2 d-flex align-items-center"><button class="tog" aria-label="展开"><svg width="12" height="12"><use href="#right"/></svg></button><svg class="ic"><use href="#f-tr"/></svg><a href="#">Traces</a></div></li>
        <li><div class="cell l2 d-flex align-items-center"><button class="tog" aria-label="展开"><svg width="12" height="12"><use href="#right"/></svg></button><svg class="ic"><use href="#f-prx"/></svg><a href="#">设备代理数据</a></div></li>
        <li><div class="cell l2 d-flex align-items-center"><span class="tog"></span><svg class="ic"><use href="#info"/></svg><a href="#">程序信息</a></div></li>
        <li><div class="cell l2 d-flex align-items-center"><span class="tog"></span><svg class="ic"><use href="#txt"/></svg><a href="#">PLC 报警文本列表</a></div></li>
        <li><div class="cell l2 d-flex align-items-center"><button class="tog" aria-label="展开"><svg width="12" height="12"><use href="#right"/></svg></button><svg class="ic"><use href="#f-plc"/></svg><a href="#">本地模块</a></div></li>
        <li class="grp"><div class="cell l1 d-flex align-items-center"><button class="tog" aria-label="折叠"><svg width="12" height="12"><use href="#down"/></svg></button><svg class="ic"><use href="#f-hmi"/></svg><a href="#">HMI_1 [TP700 Comfort]</a></div></li>
        <li><div class="cell l2 d-flex align-items-center"><span class="tog"></span><svg class="ic"><use href="#conf"/></svg><a href="#">设备组态</a></div></li>
        <li><div class="cell l2 d-flex align-items-center"><span class="tog"></span><svg class="ic"><use href="#dia"/></svg><a href="#">在线和诊断</a></div></li>
        <li><div class="cell l2 d-flex align-items-center"><span class="tog"></span><svg class="ic"><use href="#wr"/></svg><a href="#">运行系统设置</a></div></li>
        <li><div class="cell l2 d-flex align-items-center"><button class="tog" aria-label="折叠"><svg width="12" height="12"><use href="#down"/></svg></button><svg class="ic"><use href="#f-scr"/></svg><a href="#">画面</a></div></li>
        <li><div class="cell l3 d-flex align-items-center"><span class="tog"></span><svg class="ic"><use href="#addn"/></svg><a href="#">添加新画面</a></div></li>
        <li><div class="cell l3 d-flex align-items-center"><span class="tog"></span><svg class="ic"><use href="#scr"/></svg><a href="#">根画面</a></div></li>
        <li><div class="cell l2 d-flex align-items-center"><button class="tog" aria-label="展开"><svg width="12" height="12"><use href="#right"/></svg></button><svg class="ic"><use href="#f-man"/></svg><a href="#">画面管理</a></div></li>
        <li><div class="cell l2 d-flex align-items-center"><button class="tog" aria-label="折叠"><svg width="12" height="12"><use href="#down"/></svg></button><svg class="ic"><use href="#fold"/></svg><a href="#">HMI 变量</a></div></li>
      </ul>
      <div class="vbar d-flex flex-column">
        <button class="sb" aria-label="向上滚动"><svg width="10" height="10"><use href="#chev"/></svg></button>
        <div class="sb thumb"><svg width="10" height="10"><use href="#grip"/></svg></div>
        <button class="sb mt-auto" aria-label="向下滚动"><svg width="10" height="10"><use href="#chevd"/></svg></button>
      </div>
    </div>
    <div class="detail d-flex align-items-center flex-shrink-0"><button class="tbtn" aria-label="展开详细视图"><svg width="10" height="10"><use href="#chevr"/></svg></button><span class="ms-1">详细视图</span></div>
  </section>

  <div class="d-flex flex-column flex-grow-1 overflow-hidden">
    <section class="flex-shrink-0">
      <div class="head crumbs d-flex align-items-center"><span>右移</span><svg viewBox="0 0 7 9"><path d="M1 0l5 4.500L1 9z" fill="#fff"/></svg><span class="latin">HMI_1 [TP700 Comfort]</span><svg viewBox="0 0 7 9"><path d="M1 0l5 4.500L1 9z" fill="#fff"/></svg><span>画面</span><svg viewBox="0 0 7 9"><path d="M1 0l5 4.500L1 9z" fill="#fff"/></svg><span>根画面</span>
        <div class="ms-auto d-flex gap-1"><button aria-label="最小化"><svg width="14" height="16"><path d="M1 10h11v3H1z" fill="#fff"/></svg></button><button aria-label="还原"><svg class="ic"><use href="#wr2"/></svg></button><button aria-label="最大化"><svg class="ic"><use href="#wmx"/></svg></button><button aria-label="关闭"><svg width="12" height="16"><path d="M1 3l10 10M11 3L1 13" stroke="#fff" stroke-width="2.500"/></svg></button></div></div>
      <div class="strip"></div>
      <div class="subtools d-flex align-items-center">
        <div class="combo fontbox d-flex"><select aria-label="字体"><option>宋体</option></select><span class="d-flex justify-content-center align-items-center"><svg width="12" height="14" viewBox="0 0 12 14"><path d="M.5.5h11v13H.5z" fill="#eef3ff" stroke="#8090d0"/><path d="M2 3.500h1M5 3.500h5M2 5.500h1M5 5.500h5M2 7.500h1M5 7.500h5M2 9.500h1M5 9.500h5M2 11.500h1M5 11.500h5" stroke="#101858"/></svg></span></div>
        <div class="combo sizebox d-flex"><select aria-label="字号"><option>17</option></select><span class="d-flex justify-content-center align-items-center"><svg width="12" height="12"><use href="#down"/></svg></span></div>
        <button class="fmt">B</button><button class="fmt fmt-i">I</button><button class="fmt text-decoration-underline">U</button><button class="fmt text-decoration-line-through">S</button>
        <button class="tbtn drop" aria-label="字号增减"><svg class="ic" viewBox="0 0 16 16"><path d="M1 14L5.500 3 10 14M3 10h5" fill="none" stroke="#0a0a50" stroke-width="2"/><path d="M10 4l3-3 3 3z" fill="#0a0a50"/></svg><svg width="8" height="10"><use href="#dd"/></svg></button>
        <button class="tbtn drop" aria-label="对齐"><svg class="ic"><use href="#al"/></svg><svg width="8" height="10"><use href="#dd"/></svg></button>
        <span class="sep"></span>
        <button class="tbtn drop" aria-label="文本颜色"><svg class="ic" viewBox="0 0 16 16"><path d="M3 12L8 1l5 11M5 8.500h6" fill="none" stroke="#0a0a50" stroke-width="2.400"/><path d="M0 13h16v3H0z"/></svg><svg width="8" height="10"><use href="#dd"/></svg></button>
        <button class="tbtn drop" aria-label="填充颜色"><svg class="ic"><use href="#fill"/></svg><svg width="8" height="10"><use href="#dd"/></svg></button>
        <button class="tbtn drop" aria-label="线条颜色"><svg class="ic"><use href="#brush"/></svg><svg width="8" height="10"><use href="#dd"/></svg></button>
        <span class="sep"></span>
        <button class="tbtn drop" aria-label="线宽"><svg class="ic"><use href="#lw"/></svg><svg width="8" height="10"><use href="#dd"/></svg></button>
        <button class="tbtn drop" aria-label="线型"><svg class="ic"><use href="#ln"/></svg><svg width="8" height="10"><use href="#dd"/></svg></button>
        <span class="sep"></span>
        <button class="tbtn drop" aria-label="顺序"><svg class="ic"><use href="#ord"/></svg><svg width="8" height="10"><use href="#dd"/></svg></button>
        <button class="tbtn drop" aria-label="旋转"><svg class="ic"><use href="#rot"/></svg><svg width="8" height="10"><use href="#dd"/></svg></button>
        <button class="tbtn drop" aria-label="居中"><svg class="ic"><use href="#cen"/></svg><svg width="8" height="10"><use href="#dd"/></svg></button>
        <button class="tbtn drop off" aria-label="分布"><svg class="ic"><use href="#dis"/></svg><svg width="8" height="10"><use href="#dd"/></svg></button>
        <button class="tbtn drop off" aria-label="大小"><svg class="ic"><use href="#siz"/></svg><svg width="8" height="10"><use href="#dd"/></svg></button>
        <span class="sep"></span>
        <button class="align-self-start" aria-label="更多"><svg width="12" height="18" viewBox="0 0 12 18"><path d="M4 5l4 4-4 4z"/></svg></button>
      </div>
      <div class="editor d-flex">
        <div class="pad-a"></div><div class="pad-b"></div><div class="pad-c"></div>
        <div class="screen position-relative flex-grow-1">
          <button class="hmibtn b-start p-0">启动</button>
          <button class="hmibtn b-stop p-0">停止</button>
          <button class="hmibtn b-loop p-0">循环喷<i class="n w"></i><i class="n c"></i><i class="n e"></i><i class="m w"></i><i class="m e"></i><i class="s w"></i><i class="s c"></i><i class="s e"></i></button>
        </div>
        <div class="rbar d-flex flex-column justify-content-between">
          <button class="sb" aria-label="向上滚动"><svg width="8" height="8"><use href="#chev"/></svg></button>
          <div class="sb mid"><svg width="10" height="10"><use href="#grip"/></svg></div>
          <button class="sb" aria-label="向下滚动"><svg width="8" height="8"><use href="#chevd"/></svg></button>
        </div>
      </div>
      <div class="hbar d-flex">
        <div class="htrack d-flex flex-grow-1">
          <button class="sb" aria-label="向左滚动"><svg width="8" height="8"><use href="#chevl"/></svg></button>
          <div class="sb thumb"><svg width="10" height="10"><use href="#gripv"/></svg></div>
          <button class="sb ms-auto" aria-label="向右滚动"><svg width="8" height="8"><use href="#chevr"/></svg></button>
        </div>
        <div class="combo zoombox d-flex"><select aria-label="缩放"><option>100%</option></select><span class="d-flex justify-content-center align-items-center"><svg width="12" height="12"><use href="#down"/></svg></span></div>
        <div class="slide"><input type="range" min="0" max="100" value="32" aria-label="缩放比例"><div class="ticks"></div></div>
        <div class="corner d-flex justify-content-center"><svg class="ic" viewBox="0 0 16 16"><path d="M4.500 1.500h9v11h-9z" fill="#c4d4f4" stroke="#0a1a60"/><path d="M5 13.500h9V3" fill="none" stroke="#0a1a60"/><path d="M1.500 4.500h6v6h-6z" fill="#4a70f8" stroke="#1030d0"/></svg></div>
      </div>
    </section>

    <section class="inspect flex-grow-1 d-flex flex-column overflow-hidden">
      <div class="head d-flex align-items-center"><span>按钮_5 [按钮]</span>
        <div class="itabs ms-auto d-flex"><button class="itab on"><svg class="ic"><use href="#prp"/></svg>属性</button><button class="itab"><svg class="ic"><use href="#inf"/></svg>信息</button><button class="itab"><svg class="ic"><use href="#dia"/></svg>诊断</button></div>
        <div class="d-flex"><button aria-label="还原"><svg class="ic"><use href="#wr2"/></svg></button><button aria-label="列表"><svg class="ic ms-1" viewBox="0 0 16 16"><path d="M2.500 2.500h10v10h-10zM2 5.500h11M2 7.500h11M2 10.500h11" fill="none" stroke="#f0f0f0"/></svg></button><button aria-label="折叠"><svg width="16" height="16"><path d="M2 5h12l-6 6z" fill="#fff"/></svg></button></div></div>
      <div class="strip d-flex align-items-end"><button class="tabx border-end-0">属性</button><button class="tabx border-end-0">动画</button><button class="tabx border-end-0">事件</button><button class="tabx on">文本</button></div>
      <div class="subtools d-flex align-items-center px-2 gap-2"><button aria-label="导出文本"><svg class="ic"><use href="#ex1"/></svg></button><button aria-label="导入文本"><svg class="ic"><use href="#ex2"/></svg></button></div>
      <div class="overflow-hidden flex-grow-1">
        <table class="table texts mb-0">
          <colgroup><col width="24"><col width="199"><col><col width="52"></colgroup>
          <thead><tr><th class="plain"></th><th><span class="d-flex align-items-center"><svg class="ic" viewBox="0 0 16 16"><circle cx="8" cy="8" r="7.500" fill="url(#gg)"/><path d="M4 3l4-1 1 3-3 3-2-1zM9 8l4-1-1 4-2 2z" fill="#e4eefc" opacity=".8"/></svg>中文（中华人民共和国）</span></th><th>引用</th><th class="plain"></th></tr></thead>
          <tbody>
            <tr class="cur"><td></td><td>喷三次</td><td>按钮_5\ON 状态文本</td><td></td></tr>
            <tr class="alt"><td></td><td>循环喷</td><td>按钮_5\OFF 状态文本</td><td></td></tr>
            <tr><td></td><td></td><td></td><td></td></tr><tr><td></td><td></td><td></td><td></td></tr>
            <tr><td></td><td></td><td></td><td></td></tr><tr><td></td><td></td><td></td><td></td></tr>
            <tr><td></td><td></td><td></td><td></td></tr><tr><td></td><td></td><td></td><td></td></tr>
            <tr><td></td><td></td><td></td><td></td></tr><tr><td></td><td></td><td></td><td></td></tr>
            <tr><td></td><td></td><td></td><td></td></tr><tr><td></td><td></td><td></td><td></td></tr>
            <tr><td></td><td></td><td></td><td></td></tr><tr><td></td><td></td><td></td><td></td></tr>
            <tr><td></td><td></td><td></td><td></td></tr>
          </tbody>
        </table>
      </div>
    </section>
  </div>
</main>
<div class="overmark">西门子工业  技术论坛<span>support.industry.siemens.com/cs</span></div>
<script src="https://cdn.jsdelivr.net/npm/bootstrap@5.3.0/dist/js/bootstrap.bundle.min.js"></script>
</body>
</html>
